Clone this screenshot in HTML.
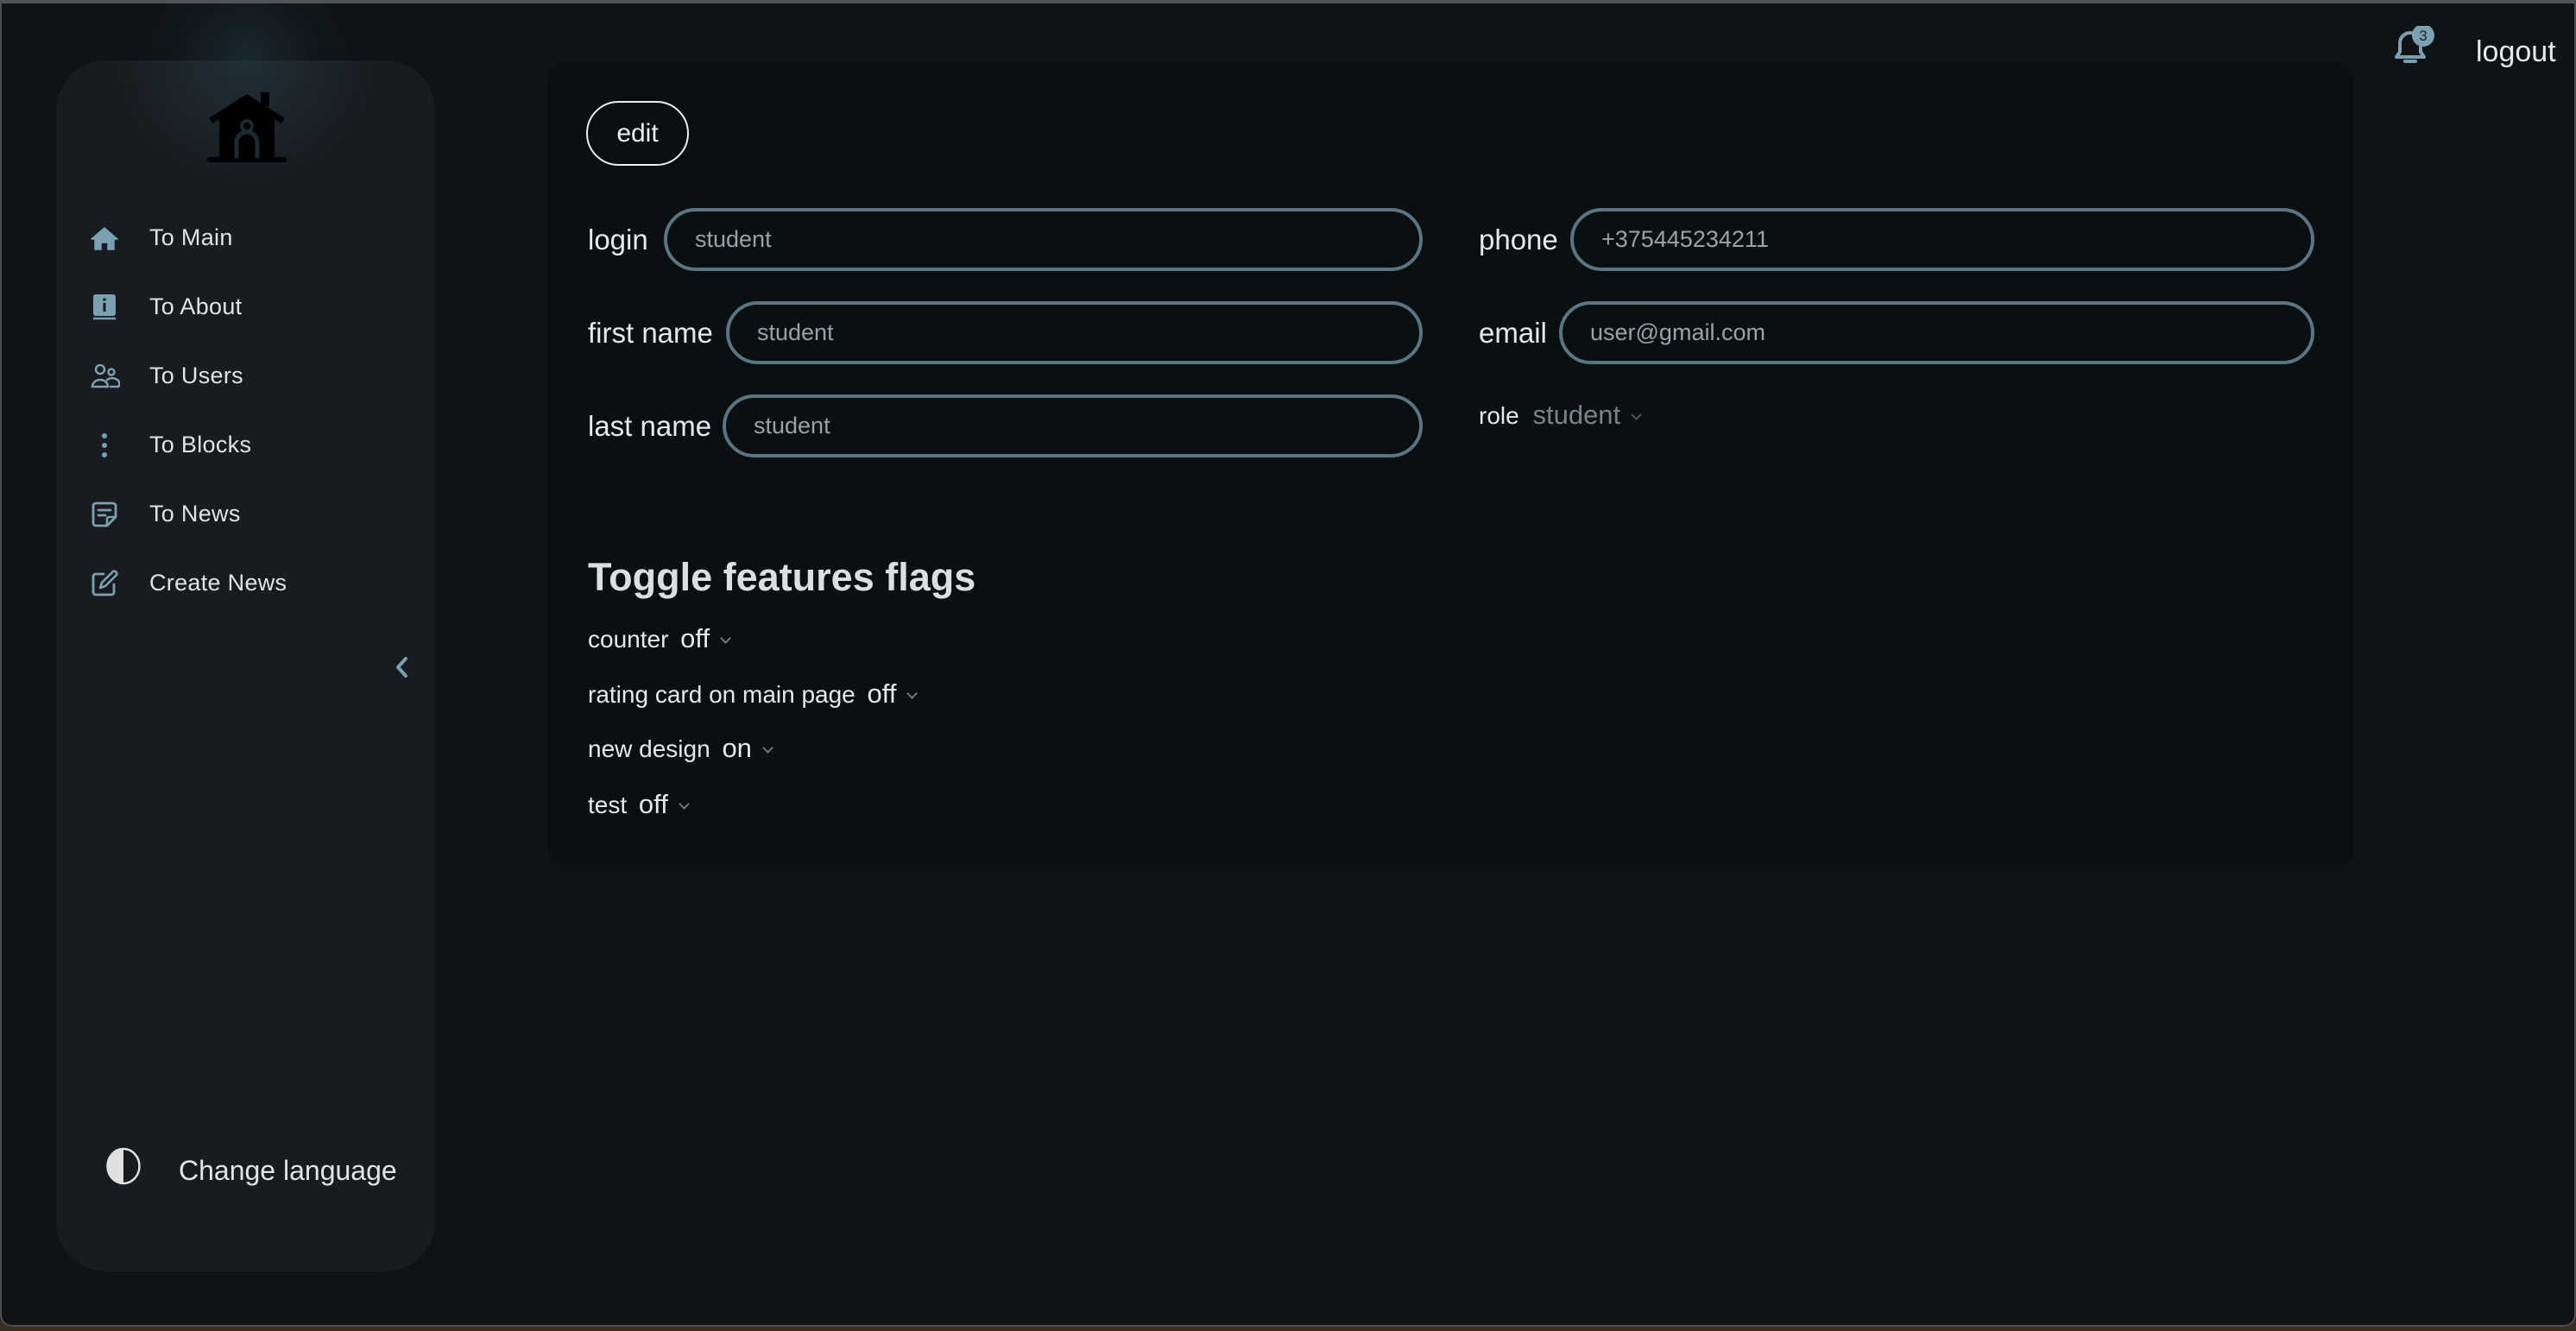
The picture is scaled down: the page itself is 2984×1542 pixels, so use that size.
<!DOCTYPE html>
<html><head><meta charset="utf-8"><style>
*{margin:0;padding:0;box-sizing:border-box}
html,body{width:2984px;height:1542px;overflow:hidden;background:#3a2e22}
body{font-family:"Liberation Sans",sans-serif;position:relative}
.win{position:absolute;left:0;top:0;width:2984px;height:1537px;background:#0e1316;border:2px solid #4a4e52;border-top:4px solid #505458;border-radius:0 0 14px 14px;overflow:hidden}
.glow{position:absolute;left:154px;top:-60px;width:260px;height:250px;background:radial-gradient(ellipse at center,rgba(45,78,96,0.35) 0%,rgba(30,55,70,0.1) 45%,rgba(0,0,0,0) 70%)}
.side{position:absolute;left:63px;top:66px;width:439px;height:1403px;background:#181c20;border-radius:58px}
.side .g{position:absolute;left:0;top:0;width:439px;height:260px;border-radius:58px 58px 0 0;background:radial-gradient(ellipse 45% 70% at 50% 0%,rgba(42,70,86,0.45) 0%,rgba(24,28,32,0) 75%)}
.nav{position:absolute;left:0;height:40px;width:439px}
.nav svg{position:absolute;left:40px;top:4px}
.nav span{position:absolute;left:108px;top:3px;font-size:27px;color:#dfe3e6;line-height:32px;letter-spacing:0.3px}
.card{position:absolute;left:632px;top:68px;width:2093px;height:932px;background:#0a0f12;border-radius:22px}
.t{position:absolute;color:#e6e8ea;white-space:nowrap}
.inp{position:absolute;height:73px;border:4px solid #5b7581;border-radius:38px;background:#0a0f12}
.inp span{position:absolute;left:32px;top:0;line-height:65px;font-size:27px;color:#9ba2a6}
.chev{display:inline-block;width:9px;height:9px;border-right:2px solid #6f7679;border-bottom:2px solid #6f7679;transform:rotate(45deg);margin-left:14px;position:relative;top:-6px}
</style></head><body>
<div class="win">
<div class="glow"></div>
<div class="side"><div class="g"></div>
<svg style="position:absolute;left:175px;top:35px" width="92" height="86" viewBox="0 0 92 86">
<path d="M46 4 L90 32 L86 38 L78 33 L78 78 L14 78 L14 33 L6 38 L2 32 Z" fill="#000"/>
<rect x="62" y="2" width="10" height="16" fill="#000"/>
<rect x="0" y="77" width="92" height="6" rx="3" fill="#000"/>
<circle cx="46" cy="41" r="6" fill="none" stroke="#1d2a31" stroke-width="4"/>
<path d="M34 78 V60 a12 12 0 0 1 24 0 V78" fill="none" stroke="#1d2a31" stroke-width="5"/>
</svg>
<div class="nav" style="top:186px"><svg width="32" height="32" viewBox="0 0 32 32"><path d="M16 4 L31 17 L27 17 L27 29 L20 29 L20 21 L12 21 L12 29 L5 29 L5 17 L1 17 Z" fill="#7c9fb1" stroke="#7c9fb1" stroke-linejoin="round" stroke-width="1.5"/></svg><span>To Main</span></div>
<div class="nav" style="top:266px"><svg width="32" height="32" viewBox="0 0 32 32"><rect x="3" y="1" width="26" height="25" rx="3" fill="#7c9fb1"/><path d="M3 29 H29" stroke="#7c9fb1" stroke-width="2.5"/><rect x="14.5" y="11" width="3" height="10" fill="#181c20"/><circle cx="16" cy="7" r="1.8" fill="#181c20"/></svg><span>To About</span></div>
<div class="nav" style="top:346px"><svg width="34" height="32" viewBox="0 0 34 32"><circle cx="11" cy="8" r="5" fill="none" stroke="#7c9fb1" stroke-width="2.5"/><circle cx="24" cy="11" r="3.5" fill="none" stroke="#7c9fb1" stroke-width="2.5"/><path d="M2 28 a9 8 0 0 1 18 0 Z" fill="none" stroke="#7c9fb1" stroke-width="2.5" stroke-linejoin="round"/><path d="M18 21 a8 6 0 0 1 14 7 H22" fill="none" stroke="#7c9fb1" stroke-width="2.5"/></svg><span>To Users</span></div>
<div class="nav" style="top:426px"><svg width="32" height="32" viewBox="0 0 32 32"><circle cx="16" cy="5" r="3" fill="#7c9fb1"/><circle cx="16" cy="16" r="3" fill="#7c9fb1"/><circle cx="16" cy="27" r="3" fill="#7c9fb1"/></svg><span>To Blocks</span></div>
<div class="nav" style="top:506px"><svg width="32" height="32" viewBox="0 0 32 32"><path d="M6 3 H26 a3 3 0 0 1 3 3 V19 L19 29 H6 a3 3 0 0 1 -3 -3 V6 a3 3 0 0 1 3 -3 Z" fill="none" stroke="#7c9fb1" stroke-width="2.8" stroke-linejoin="round"/><path d="M9 11 H23 M9 17 H17" stroke="#7c9fb1" stroke-width="2.8" stroke-linecap="round"/><path d="M19 29 V21 a2 2 0 0 1 2 -2 H29" fill="none" stroke="#7c9fb1" stroke-width="2.5"/></svg><span>To News</span></div>
<div class="nav" style="top:586px"><svg width="32" height="32" viewBox="0 0 32 32"><path d="M15 5 H6 a3 3 0 0 0 -3 3 V26 a3 3 0 0 0 3 3 H24 a3 3 0 0 0 3 -3 V17" fill="none" stroke="#7c9fb1" stroke-width="2.8" stroke-linecap="round"/><path d="M26 2 a3 3 0 0 1 4 4 L17 19 L11 21 L13 15 Z" fill="none" stroke="#7c9fb1" stroke-width="2.6" stroke-linejoin="round"/></svg><span>Create News</span></div>
<svg style="position:absolute;left:392px;top:690px" width="16" height="26" viewBox="0 0 16 26"><path d="M13 3 L4 13 L13 23" fill="none" stroke="#7c9fb1" stroke-width="4" stroke-linecap="round" stroke-linejoin="round"/></svg>
<svg style="position:absolute;left:57px;top:1259px" width="42" height="44" viewBox="0 0 42 44"><ellipse cx="21" cy="22" rx="18.5" ry="20" fill="none" stroke="#e0e0e0" stroke-width="2.5"/><path d="M21 2 A18.5 20 0 0 0 21 42 Z" fill="#e0e0e0"/></svg>
<div class="t" style="left:142px;top:1266px;font-size:32px;line-height:40px;color:#e2e4e6">Change language</div>
</div>

<svg style="position:absolute;left:2772px;top:26px" width="52" height="50" viewBox="0 0 52 50"><path d="M18 8 a12 12 0 0 1 12 12 V30 L34 36 H2 L6 30 V20 a12 12 0 0 1 12 -12 Z" fill="none" stroke="#7c9fb1" stroke-width="4" stroke-linejoin="round"/><path d="M12 41 H24" stroke="#7c9fb1" stroke-width="4" stroke-linecap="round"/><circle cx="33" cy="11" r="13" fill="#7c9fb1"/><text x="33" y="17" font-family="Liberation Sans" font-size="17" fill="#1a2428" text-anchor="middle">3</text></svg>
<div class="t" style="left:2866px;top:36px;font-size:34px;line-height:40px;color:#e6e8ea">logout</div>

<div class="card">
<div style="position:absolute;left:45px;top:45px;width:119px;height:75px;border:2px solid #eee;border-radius:38px;color:#eee;font-size:30px;line-height:71px;text-align:center">edit</div>

<div class="t" style="left:47px;top:186px;font-size:33px;line-height:40px">login</div>
<div class="inp" style="left:135px;top:169px;width:879px"><span>student</span></div>
<div class="t" style="left:47px;top:294px;font-size:33px;line-height:40px">first name</div>
<div class="inp" style="left:207px;top:277px;width:807px"><span>student</span></div>
<div class="t" style="left:47px;top:402px;font-size:33px;line-height:40px">last name</div>
<div class="inp" style="left:203px;top:385px;width:811px"><span>student</span></div>

<div class="t" style="left:1079px;top:186px;font-size:33px;line-height:40px">phone</div>
<div class="inp" style="left:1185px;top:169px;width:862px"><span>+375445234211</span></div>
<div class="t" style="left:1079px;top:294px;font-size:33px;line-height:40px">email</div>
<div class="inp" style="left:1172px;top:277px;width:875px"><span>user@gmail.com</span></div>
<div class="t" style="left:1079px;top:391px;font-size:28px;line-height:36px">role <span style="color:#7b8387;font-size:31px;margin-left:8px">student</span><span class="chev" style="border-color:#4c5356"></span></div>

<div class="t" style="left:47px;top:569px;font-size:45px;line-height:56px;font-weight:bold;color:#dcdfe1">Toggle features flags</div>
<div class="t" style="left:47px;top:650px;font-size:28px;line-height:36px">counter <span style="font-size:31px;margin-left:6px">off</span><span class="chev"></span></div>
<div class="t" style="left:47px;top:714px;font-size:28px;line-height:36px">rating card on main page <span style="font-size:31px;margin-left:6px">off</span><span class="chev"></span></div>
<div class="t" style="left:47px;top:777px;font-size:28px;line-height:36px">new design <span style="font-size:31px;margin-left:6px">on</span><span class="chev"></span></div>
<div class="t" style="left:47px;top:842px;font-size:28px;line-height:36px">test <span style="font-size:31px;margin-left:6px">off</span><span class="chev"></span></div>
</div>
</div>
</body></html>
